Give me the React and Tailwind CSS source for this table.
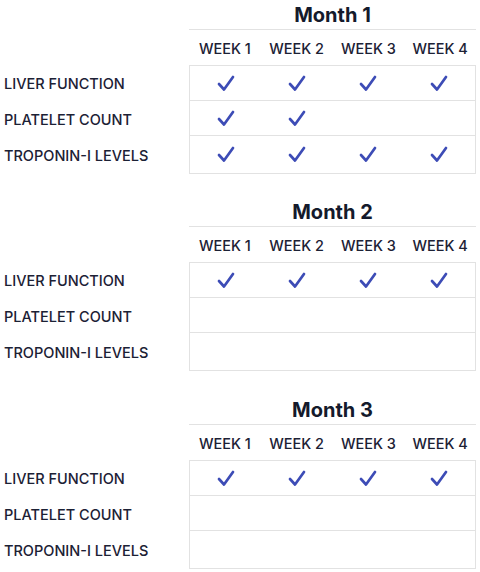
import React from 'react';

const weeks = ['WEEK 1', 'WEEK 2', 'WEEK 3', 'WEEK 4'];
const tests = ['LIVER FUNCTION', 'PLATELET COUNT', 'TROPONIN-I LEVELS'];

const months = [
  {
    title: 'Month 1',
    gap: 'mt-0',
    checks: [
      [true, true, true, true],
      [true, true, false, false],
      [true, true, true, true],
    ],
  },
  {
    title: 'Month 2',
    gap: 'mt-[23px]',
    checks: [
      [true, true, true, true],
      [false, false, false, false],
      [false, false, false, false],
    ],
  },
  {
    title: 'Month 3',
    gap: 'mt-[24px]',
    checks: [
      [true, true, true, true],
      [false, false, false, false],
      [false, false, false, false],
    ],
  },
];

const Check = () => (
  <svg width="18" height="17" viewBox="0 0 18 17" fill="none" className="mt-[1px]">
    <path
      d="M2 9 L7 14.5 L16 2"
      stroke="#3d4cb6"
      strokeWidth="2.7"
      strokeLinecap="round"
      strokeLinejoin="round"
    />
  </svg>
);

const MonthBlock = ({ title, checks, gap }) => (
  <div className={`flex flex-col ${gap}`}>
    <div className="ml-[189px] w-[287px] h-[30px] border-b border-[#e2e2e2] flex items-center justify-center text-[20px] font-bold text-[#141a2c]">
      {title}
    </div>
    <div className="ml-[189px] w-[287px] h-[35px] grid grid-cols-4 items-center text-center text-[14.5px] font-medium text-[#1c2135]">
      {weeks.map((w) => (
        <span key={w} className="pt-[3px]">{w}</span>
      ))}
    </div>
    <div className="flex">
      <div className="w-[189px] flex flex-col pt-px">
        {tests.map((t) => (
          <div key={t} className="h-[36px] flex items-center pl-[4px] text-[14.5px] font-medium text-[#1c2135]">
            {t}
          </div>
        ))}
      </div>
      <div className="w-[287px] border border-[#e2e2e2] divide-y divide-[#e2e2e2]">
        {checks.map((row, i) => (
          <div key={i} className="h-[35px] grid grid-cols-4 items-center">
            {row.map((c, j) => (
              <div key={j} className="flex justify-center">
                {c ? <Check /> : null}
              </div>
            ))}
          </div>
        ))}
      </div>
    </div>
  </div>
);

export default function App() {
  return (
    <div className="w-[480px] h-[572px] bg-white overflow-hidden flex flex-col font-['Inter',sans-serif]">
      {months.map((m) => (
        <MonthBlock key={m.title} title={m.title} checks={m.checks} gap={m.gap} />
      ))}
    </div>
  );
}
